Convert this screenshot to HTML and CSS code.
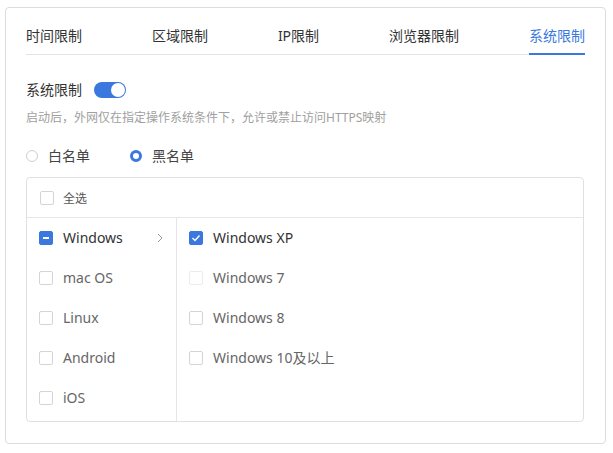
FILE: index.html
```html
<!DOCTYPE html>
<html lang="zh-CN">
<head>
<meta charset="utf-8">
<link rel="stylesheet" href="styles.css">
</head>
<body>
<div class="card">
  <div class="tabs">
    <div class="tab">时间限制</div>
    <div class="tab">区域限制</div>
    <div class="tab">IP限制</div>
    <div class="tab">浏览器限制</div>
    <div class="tab active">系统限制</div>
  </div>

  <div class="switch-row">
    <span class="label">系统限制</span>
    <span class="toggle"><span class="knob"></span></span>
  </div>
  <div class="desc">启动后，外网仅在指定操作系统条件下，允许或禁止访问HTTPS映射</div>

  <div class="radios">
    <label class="radio"><span class="dot"></span>白名单</label>
    <label class="radio checked"><span class="dot"></span>黑名单</label>
  </div>

  <div class="box">
    <div class="box-head">
      <span class="cb"></span><span class="all">全选</span>
    </div>
    <div class="box-body">
      <div class="col left">
        <div class="item strong"><span class="cb indet"></span><span class="txt">Windows</span>
          <svg class="chev" width="6" height="10" viewBox="0 0 6 10"><path d="M1 1l4 4-4 4" fill="none" stroke="#999" stroke-width="1"/></svg>
        </div>
        <div class="item"><span class="cb"></span><span class="txt">mac OS</span></div>
        <div class="item"><span class="cb"></span><span class="txt">Linux</span></div>
        <div class="item"><span class="cb"></span><span class="txt">Android</span></div>
        <div class="item"><span class="cb"></span><span class="txt">iOS</span></div>
      </div>
      <div class="col right">
        <div class="item strong"><span class="cb checked"><svg width="10" height="8" viewBox="0 0 10 8"><path d="M1.5 4l2.5 2.5L8.5 1.5" fill="none" stroke="#fff" stroke-width="1.4"/></svg></span><span class="txt">Windows XP</span></div>
        <div class="item"><span class="cb disabled"></span><span class="txt">Windows 7</span></div>
        <div class="item"><span class="cb"></span><span class="txt">Windows 8</span></div>
        <div class="item"><span class="cb"></span><span class="txt">Windows 10及以上</span></div>
      </div>
    </div>
  </div>
</div>
</body>
</html>
```

FILE: styles.css
```css
* { box-sizing: border-box; }
html, body { margin: 0; padding: 0; background: #fff; }
body {
  font-family: "Noto Sans", "Noto Sans CJK SC", sans-serif;
  font-size: 14px;
  color: #333;
}
.card {
  margin: 7px 0 0 5px;
  width: 601px;
  height: 437px;
  border: 1px solid #dcdcdc;
  border-radius: 4px;
  padding: 0 20px;
}
.tabs {
  display: flex;
  justify-content: space-between;
  padding-top: 18px;
  border-bottom: 1px solid #e4e4e4;
}
.tab {
  line-height: 20px;
  padding-bottom: 7px;
  color: #333;
  border-bottom: 2px solid transparent;
  margin-bottom: -1px;
}
.tab.active {
  color: #3a78e0;
  border-bottom-color: #3a78e0;
}
.switch-row {
  display: flex;
  align-items: center;
  margin-top: 25px;
  height: 20px;
}
.label { line-height: 20px; color: #333; }
.toggle {
  margin-left: 12px;
  width: 32px;
  height: 16px;
  border-radius: 8px;
  background: #3a78e0;
  position: relative;
  display: inline-block;
}
.knob {
  position: absolute;
  right: 1px;
  top: 1px;
  width: 14px;
  height: 14px;
  border-radius: 50%;
  background: #fff;
}
.desc {
  margin-top: 10px;
  font-size: 12px;
  line-height: 16px;
  color: #a0a0a0;
}
.radios {
  display: flex;
  margin-top: 20px;
  height: 20px;
  align-items: center;
}
.radio {
  display: flex;
  align-items: center;
  line-height: 20px;
  color: #444;
  margin-right: 40px;
}
.radio .dot {
  width: 12px;
  height: 12px;
  border: 1px solid #cfcfcf;
  border-radius: 50%;
  margin-right: 10px;
  background: #fff;
}
.radio.checked .dot {
  border: 3.5px solid #3a78e0;
  background: #fff;
}
.box {
  margin-top: 11px;
  border: 1px solid #e0e0e0;
  border-radius: 4px;
  width: 558px;
}
.box-head {
  height: 40px;
  border-bottom: 1px solid #e6e6e6;
  display: flex;
  align-items: center;
  padding-left: 13px;
}
.all {
  font-size: 12px;
  color: #555;
  margin-left: 9px;
}
.box-body {
  display: flex;
  padding-bottom: 3px;
}
.col.left {
  width: 150px;
  border-right: 1px solid #e6e6e6;
  padding-left: 12px;
  margin-bottom: -3px;
  padding-bottom: 3px;
}
.col.right {
  flex: 1;
  padding-left: 12px;
}
.item {
  height: 40px;
  display: flex;
  align-items: center;
  color: #666;
  font-size: 14px;
  position: relative;
}
.item.strong { color: #333; }
.item .txt { margin-left: 10px; line-height: 20px; }
.cb {
  width: 14px;
  height: 14px;
  border: 1px solid #d4d4d4;
  border-radius: 2px;
  display: inline-flex;
  align-items: center;
  justify-content: center;
  background: #fff;
  flex: none;
}
.cb.disabled { border-color: #ececec; }
.cb.checked { background: #3a78e0; border-color: #3a78e0; }
.cb.indet { background: #3a78e0; border-color: #3a78e0; }
.cb.indet::after {
  content: "";
  width: 6px;
  height: 2px;
  background: #fff;
}
.chev {
  position: absolute;
  left: 118px;
  top: 15px;
}
```
